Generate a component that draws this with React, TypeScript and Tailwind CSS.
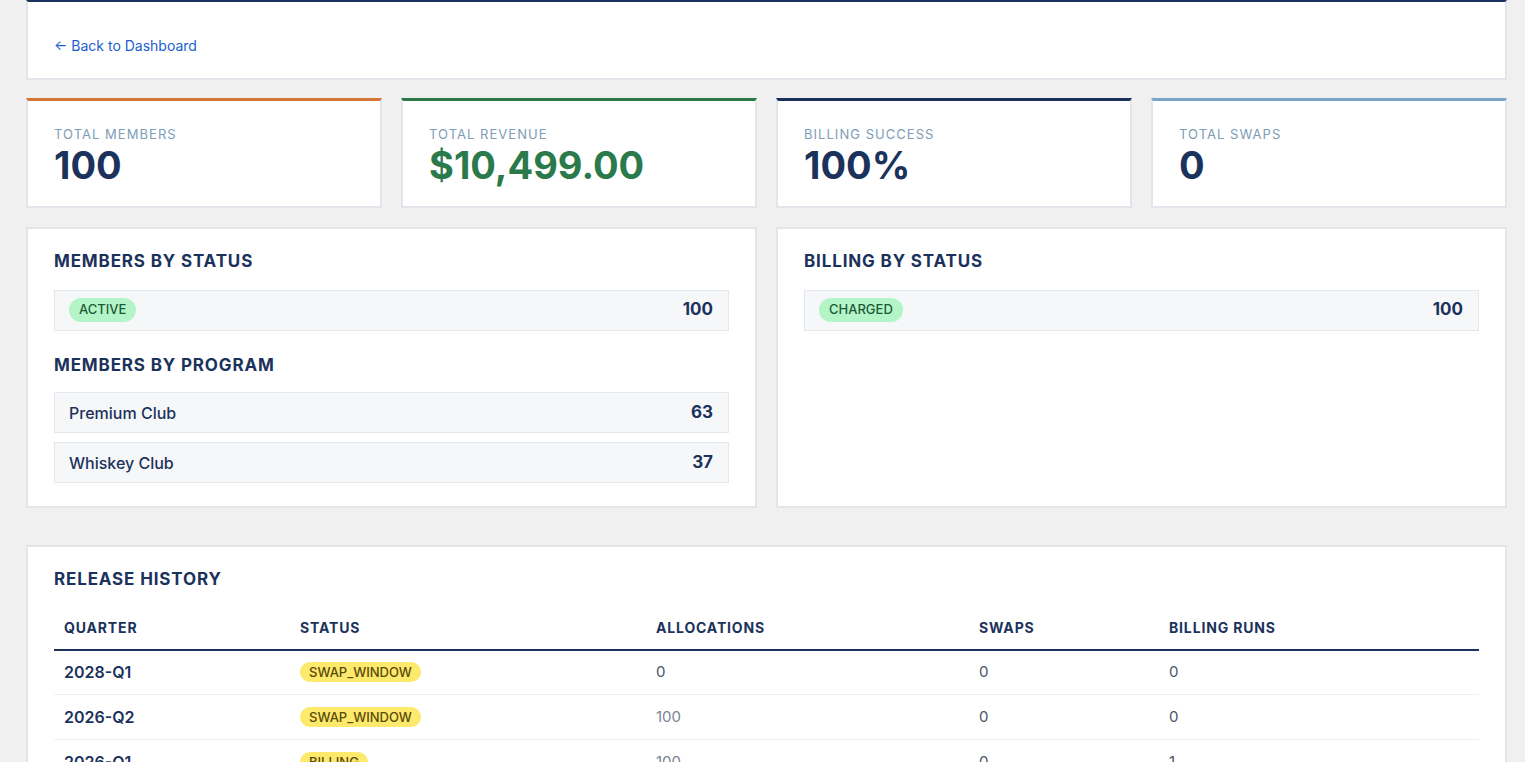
export default function App() {
  const stats = [
    { label: "TOTAL MEMBERS", value: "100", border: "border-t-[#d4753a]", color: "text-[#1b325c]" },
    { label: "TOTAL REVENUE", value: "$10,499.00", border: "border-t-[#2a7a48]", color: "text-[#2a7a4b]" },
    { label: "BILLING SUCCESS", value: "100%", border: "border-t-[#1b325c]", color: "text-[#1b325c]" },
    { label: "TOTAL SWAPS", value: "0", border: "border-t-[#7aa4c8]", color: "text-[#1b325c]" },
  ];
  const rows = [
    { q: "2028-Q1", s: "SWAP_WINDOW", a: "0", sw: "0", b: "0", dark: true },
    { q: "2026-Q2", s: "SWAP_WINDOW", a: "100", sw: "0", b: "0", dark: false },
    { q: "2026-Q1", s: "BILLING", a: "100", sw: "0", b: "1", dark: false },
  ];
  const Row = ({ left, right }: { left: React.ReactNode; right: string }) => (
    <div className="flex items-center justify-between h-[41px] pl-[14px] pr-[15px] bg-[#f6f7f9] border border-[#e4e8ec]">
      {left}
      <span className="text-[17px] font-bold text-[#1b325c]">{right}</span>
    </div>
  );
  const Badge = ({ t }: { t: string }) => (
    <span className="px-[10px] py-[2px] rounded-full bg-[#b4f5c8] text-[#1d5a36] text-[13px] font-medium">{t}</span>
  );
  return (
    <div className="min-h-screen bg-[#f0f0f0] pl-[26px] pr-[18px] pb-8 text-[#1b325c]" style={{ fontFamily: "Inter, 'Liberation Sans', sans-serif" }}>
      <div className="bg-white border-t-2 border-t-[#1b325c] border-x-2 border-b-2 border-[#e2e6ea] h-[80px] flex items-center px-[26px]">
        <a className="text-[14px] text-[#1a5fd0] mt-[10px]">← Back to Dashboard</a>
      </div>
      <div className="grid grid-cols-4 gap-[19px] mt-[18px]">
        {stats.map((s) => (
          <div key={s.label} className={`bg-white border-2 border-[#e2e6ea] border-t-[3px] ${s.border} h-[110px] px-[26px] pt-[27px]`}>
            <div className="text-[13px] tracking-[0.08em] text-[#7d9db8] leading-none">{s.label}</div>
            <div className={`text-[38px] font-bold leading-none mt-[5px] ${s.color}`}>{s.value}</div>
          </div>
        ))}
      </div>
      <div className="grid grid-cols-2 gap-[19px] mt-[19px]">
        <div className="bg-white border-2 border-[#e2e6ea] h-[281px] px-[26px] pt-[20px]">
          <h2 className="text-[17px] font-bold tracking-[0.05em] mb-[15px]">MEMBERS BY STATUS</h2>
          <Row left={<Badge t="ACTIVE" />} right="100" />
          <h2 className="text-[17px] font-bold tracking-[0.05em] mt-[22px] mb-[14px]">MEMBERS BY PROGRAM</h2>
          <div className="flex flex-col gap-[9px]">
            <Row left={<span className="text-[16px] font-medium">Premium Club</span>} right="63" />
            <Row left={<span className="text-[16px] font-medium">Whiskey Club</span>} right="37" />
          </div>
        </div>
        <div className="bg-white border-2 border-[#e2e6ea] h-[281px] px-[26px] pt-[20px]">
          <h2 className="text-[17px] font-bold tracking-[0.05em] mb-[15px]">BILLING BY STATUS</h2>
          <Row left={<Badge t="CHARGED" />} right="100" />
        </div>
      </div>
      <div className="bg-white border-2 border-[#e2e6ea] mt-[37px] px-[26px] pt-[20px] pb-6">
        <h2 className="text-[17px] font-bold tracking-[0.05em] mb-[24px]">RELEASE HISTORY</h2>
        <table className="w-full text-left border-collapse">
          <thead>
            <tr className="border-b-2 border-[#1b325c] text-[14px] font-bold tracking-[0.06em]">
              <th className="w-[236px] pl-[10px] pb-[11px] font-bold">QUARTER</th>
              <th className="w-[356px] pl-[10px] pb-[11px] font-bold">STATUS</th>
              <th className="w-[323px] pl-[10px] pb-[11px] font-bold">ALLOCATIONS</th>
              <th className="w-[190px] pl-[10px] pb-[11px] font-bold">SWAPS</th>
              <th className="pl-[10px] pb-[11px] font-bold">BILLING RUNS</th>
            </tr>
          </thead>
          <tbody>
            {rows.map((r) => (
              <tr key={r.q} className="border-b border-[#eef0f2] h-[45px] text-[15px]">
                <td className="pl-[10px] font-semibold text-[16px]">{r.q}</td>
                <td className="pl-[10px]">
                  <span className="px-[9px] py-[2px] rounded-full bg-[#fde96b] text-[#5a4a0a] text-[13px] font-medium">{r.s}</span>
                </td>
                <td className={`pl-[10px] ${r.dark ? "text-[#4a5568]" : "text-[#7a8494]"}`}>{r.a}</td>
                <td className="pl-[10px] text-[#4a5568]">{r.sw}</td>
                <td className="pl-[10px] text-[#4a5568]">{r.b}</td>
              </tr>
            ))}
          </tbody>
        </table>
      </div>
    </div>
  );
}
